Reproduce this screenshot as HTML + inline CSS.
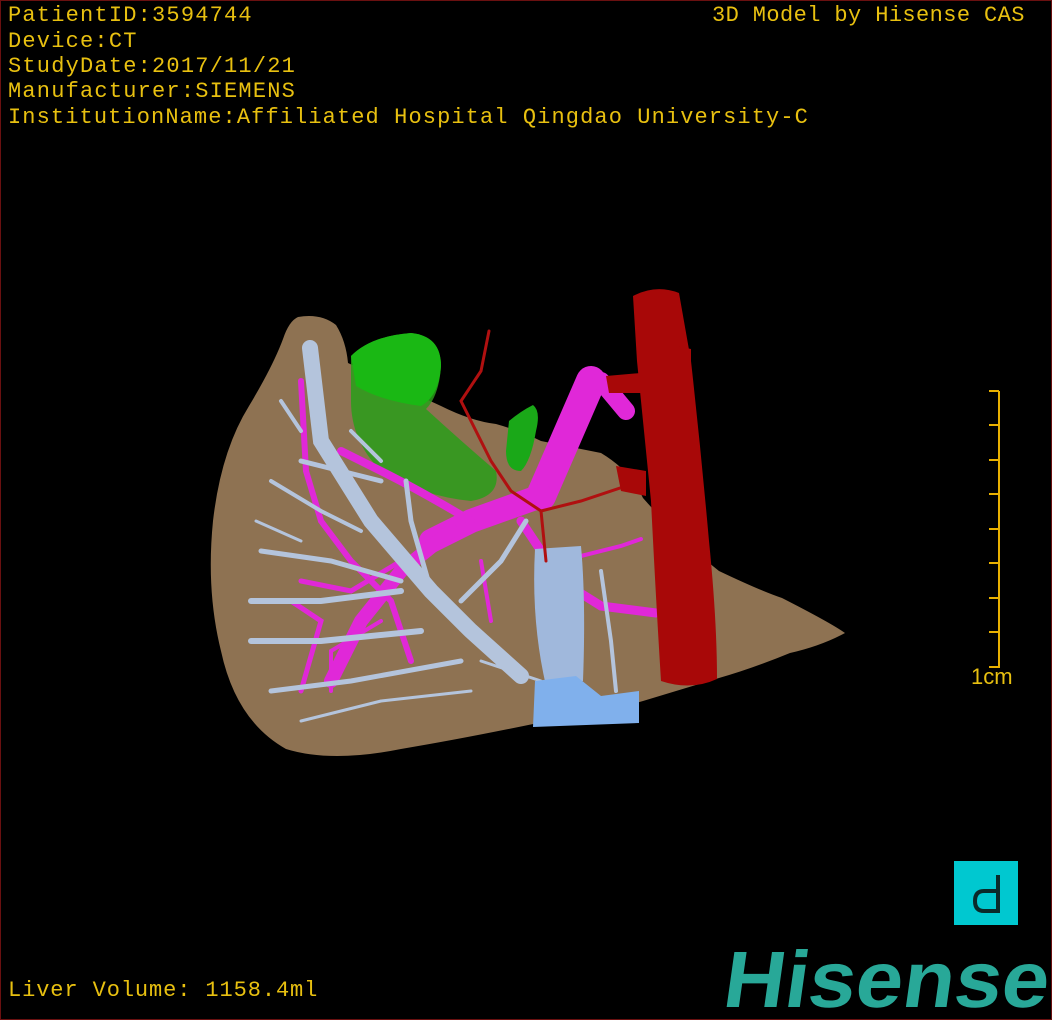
<!DOCTYPE html>
<html><head><meta charset="utf-8"><style>
html,body{margin:0;padding:0;background:#000;}
#s{position:relative;width:1050px;height:1018px;border:1px solid #6a1010;background:#000;overflow:hidden;}
.t{position:absolute;color:#e8c010;font-family:"Liberation Mono",monospace;font-size:22px;letter-spacing:1.2px;white-space:pre;line-height:1;}
</style></head><body><div id="s">
<div class="t" style="left:7px;top:4px">PatientID:3594744</div>
<div class="t" style="left:7px;top:30px">Device:CT</div>
<div class="t" style="left:7px;top:55px">StudyDate:2017/11/21</div>
<div class="t" style="left:7px;top:80px">Manufacturer:SIEMENS</div>
<div class="t" style="left:7px;top:106px;letter-spacing:1.1px">InstitutionName:Affiliated Hospital Qingdao University-C</div>
<div class="t" style="left:711px;top:4px;letter-spacing:0.4px">3D Model by Hisense CAS</div>
<div class="t" style="left:7px;top:979px;letter-spacing:0.9px">Liver Volume: 1158.4ml</div>
<div class="t" style="left:970px;top:665px;font-family:'Liberation Sans',sans-serif;letter-spacing:0">1cm</div>
<svg width="1050" height="1018" style="position:absolute;left:0;top:0">
<path d="M297,316 Q320,312 335,324 Q345,340 347,362 L440,405 Q470,420 495,423 Q520,430 540,440 L600,452 Q630,470 642,497 Q680,540 718,570 Q760,590 781,597 Q830,622 844,632 Q820,645 789,652 Q750,668 718,677 L642,700 Q590,715 537,722 Q460,738 400,748 Q330,762 285,748 Q235,720 220,650 Q205,590 212,520 Q220,450 248,405 Q272,365 282,338 Q288,320 297,316 Z" fill="#8e7252"/>
<path d="M350,355 Q370,335 410,332 Q440,335 440,365 Q438,395 425,408 Q460,440 495,470 Q500,495 470,500 Q420,495 380,470 Q350,440 350,400 Z" fill="#2a9d1a" opacity=".85"/>
<path d="M350,355 Q370,335 410,332 Q440,335 440,365 Q438,395 420,405 Q380,400 355,385 Z" fill="#1ab814"/>
<path d="M508,420 Q520,410 532,404 Q540,410 535,430 Q530,460 520,470 Q505,470 505,450 Z" fill="#1aa818"/>
<g stroke="#e028d8" fill="none" stroke-linecap="round">
<path d="M590,380 L540,495" stroke-width="30"/>
<path d="M600,380 L625,410" stroke-width="18"/>
<path d="M540,495 L470,520 L430,540" stroke-width="24"/>
<path d="M450,530 L400,570 L360,620 L330,680" stroke-width="14"/>
<path d="M470,520 Q420,490 380,470 L340,450" stroke-width="8"/>
<path d="M520,520 L560,580 L600,605 L655,612" stroke-width="9"/>
<path d="M300,380 L305,470 L320,520" stroke-width="6"/>
<path d="M320,520 L350,560 L390,600 L410,660" stroke-width="6"/>
<path d="M290,600 L320,620 L300,690" stroke-width="5"/>
<path d="M400,560 L350,590 L300,580" stroke-width="5"/>
<path d="M480,560 L490,620" stroke-width="4"/>
<path d="M560,560 L620,545 L640,538" stroke-width="4"/>
<path d="M380,620 L330,650 L330,690" stroke-width="4"/>
</g>
<g stroke="#b4c4dc" fill="none" stroke-linecap="round">
<path d="M309,347 L320,440 L370,520 L430,590 L470,630 L520,675" stroke-width="16"/>
<path d="M300,460 L340,470 L380,480" stroke-width="5"/>
<path d="M250,600 L320,600 L400,590" stroke-width="6"/>
<path d="M270,480 L320,510 L360,530" stroke-width="4"/>
<path d="M260,550 L330,560 L400,580" stroke-width="5"/>
<path d="M250,640 L320,640 L420,630" stroke-width="6"/>
<path d="M270,690 L350,680 L460,660" stroke-width="5"/>
<path d="M280,400 L300,430" stroke-width="4"/>
<path d="M430,590 L410,520 L405,480" stroke-width="5"/>
<path d="M460,600 L500,560 L525,520" stroke-width="5"/>
<path d="M350,430 L380,460" stroke-width="4"/>
<path d="M300,720 L380,700 L470,690" stroke-width="3"/>
<path d="M600,570 L610,640 L615,690" stroke-width="4"/>
<path d="M255,520 L300,540" stroke-width="3"/>
<path d="M480,660 L540,680" stroke-width="3"/>
</g>
<path d="M534,548 L580,545 Q585,600 582,680 L545,685 Q530,620 534,548 Z" fill="#a0b8dc"/>
<path d="M534,680 L575,675 L600,695 L638,690 L638,722 L532,726 Z" fill="#80b0ec"/>
<g stroke="#b01010" fill="none" stroke-linecap="round">
<path d="M488,330 L480,370 L460,400 L490,460 L510,490 L540,510 L580,500 L640,480" stroke-width="3"/>
<path d="M540,510 L545,560" stroke-width="3"/>
</g>
<path d="M632,295 Q655,283 678,292 L690,360 Q700,450 708,540 Q716,620 716,678 Q690,690 660,680 Q655,600 650,500 Q642,420 636,360 Z" fill="#a80808"/>
<path d="M605,375 L640,372 L640,392 L608,392 Z" fill="#a80808"/>
<path d="M676,345 L690,348 L690,368 L676,368 Z" fill="#a80808"/>
<path d="M615,465 L645,470 L645,495 L620,490 Z" fill="#a80808"/>
<g stroke="#e8b000" stroke-width="2">
<line x1="998" y1="390" x2="998" y2="667"/>
<line x1="988" y1="390" x2="998" y2="390"/>
<line x1="988" y1="424" x2="998" y2="424"/>
<line x1="988" y1="459" x2="998" y2="459"/>
<line x1="988" y1="493" x2="998" y2="493"/>
<line x1="988" y1="528" x2="998" y2="528"/>
<line x1="988" y1="562" x2="998" y2="562"/>
<line x1="988" y1="597" x2="998" y2="597"/>
<line x1="988" y1="631" x2="998" y2="631"/>
<line x1="988" y1="666" x2="998" y2="666"/>
</g>
<rect x="953" y="860" width="64" height="64" fill="#00c8d0"/>
<path d="M997,874 L997,910 L983,910 Q974,910 974,900 Q974,890 983,890 L997,890" fill="none" stroke="#0a2a2a" stroke-width="4"/>
<g transform="translate(720,1006) skewX(-8)">
<text x="0" y="0" font-family="Liberation Sans,sans-serif" font-weight="bold" font-size="80" fill="#28a898" textLength="325" lengthAdjust="spacingAndGlyphs">Hisense</text>
</g>
</svg>
</div></body></html>
